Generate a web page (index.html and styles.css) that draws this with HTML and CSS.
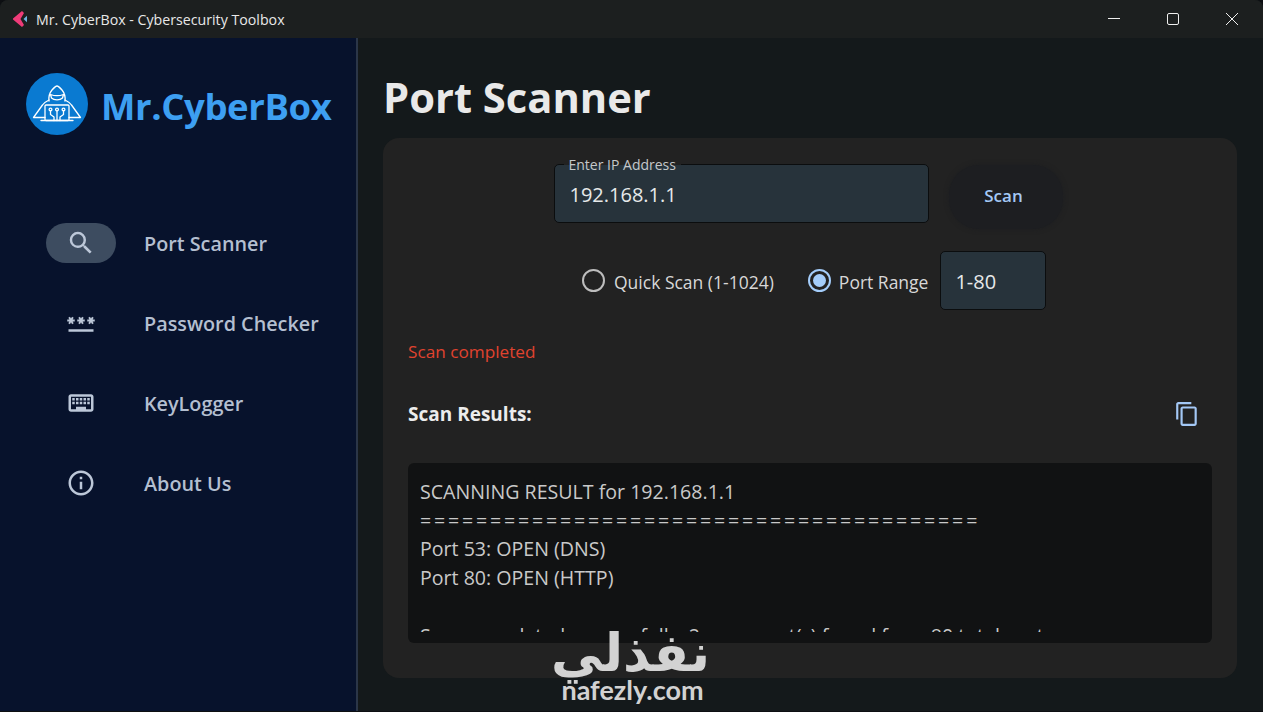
FILE: index.html
```html
<!DOCTYPE html>
<html lang="en">
<head>
<meta charset="utf-8">
<title>Mr. CyberBox - Cybersecurity Toolbox</title>
<link rel="stylesheet" href="styles.css">
</head>
<body>
<div class="window">
  <header class="titlebar">
    <svg class="app-icon" viewBox="0 0 16 16"><path d="M11.500 8 15 4.800V11.200z" fill="#6cb4e0"/><path d="M10 0 1 7.500V8.500L10 16 12 14 8.500 8 12 2z" fill="#ee3b78"/></svg>
    <span class="app-title">Mr. CyberBox - Cybersecurity Toolbox</span>
    <div class="win-controls">
      <svg viewBox="0 0 12 12"><path d="M0 5.500h12" /></svg>
      <svg viewBox="0 0 12 12"><rect x=".5" y=".5" width="11" height="11" rx="1.500"/></svg>
      <svg viewBox="0 0 12 12"><path d="M0 0l12 12M12 0 0 12"/></svg>
    </div>
  </header>
  <div class="body">
    <aside class="sidebar">
      <div class="brand">
        <svg class="logo" viewBox="0 0 62 62">
          <circle cx="31" cy="31" r="31" fill="#0a7ad1"/>
          <g fill="none" stroke="#fff" stroke-width="1.300" stroke-linejoin="round" stroke-linecap="round">
            <path d="M23 28c-.5-4 .5-8 3-11 2.500-2.800 4-4 5-4s2.500 1.200 5 4c2.500 3 3.500 7 3 11"/>
            <path d="M24.500 21.500c4 1.500 9 1.500 13 0l-1 3.500c-2.500 2.500-8.500 2.500-11 0z"/>
            <path d="M23 27c-2 1-5 2.500-6.500 5L7.500 44.500H19"/>
            <path d="M39 27c2 1 5 2.500 6.500 5l9 12.500H43"/>
            <rect x="19" y="32" width="24" height="15.500" rx="1"/>
            <path d="M15 47.500h32"/>
            <path d="M24.500 38v3.500l3.500 2.500v3.500M31 38v9.500M37.500 38v3.500L34 44v3.500"/>
            <circle cx="24.500" cy="36.500" r="1.400"/><circle cx="31" cy="36.500" r="1.400"/><circle cx="37.500" cy="36.500" r="1.400"/>
          </g>
        </svg>
        <span class="brand-name">Mr.CyberBox</span>
      </div>
      <nav class="nav">
        <a class="nav-item">
          <span class="nav-pill active">
            <svg viewBox="0 0 24 24"><path d="M15.500 14h-.79l-.28-.27A6.470 6.470 0 0 0 16 9.500 6.500 6.500 0 1 0 9.500 16c1.610 0 3.090-.59 4.230-1.570l.27.28v.79l5 4.990L20.490 19l-4.990-5zm-6 0C7.010 14 5 11.990 5 9.500S7.010 5 9.500 5 14 7.010 14 9.500 11.990 14 9.500 14z"/></svg>
          </span>
          <span>Port Scanner</span>
        </a>
        <a class="nav-item">
          <span class="nav-pill">
            <svg viewBox="0 0 24 24"><path d="M2 17h20v2H2v-2zm1.150-4.050L4 11.470l.85 1.480 1.300-.75-.85-1.480H7v-1.500H5.300l.85-1.470L4.850 7 4 8.470 3.150 7l-1.300.75.850 1.470H1v1.500h1.700l-.85 1.480 1.300.75zm6.700-.75 1.300.75.85-1.480.85 1.480 1.300-.75-.85-1.480H15v-1.500h-1.700l.85-1.470-1.300-.75L12 8.470 11.150 7l-1.300.75.85 1.470H9v1.500h1.700l-.85 1.480zM23 9.220h-1.700l.85-1.470-1.300-.75L20 8.470 19.150 7l-1.300.75.85 1.470H17v1.500h1.700l-.85 1.480 1.300.75.85-1.480.85 1.480 1.300-.75-.85-1.480H23v-1.500z"/></svg>
          </span>
          <span>Password Checker</span>
        </a>
        <a class="nav-item">
          <span class="nav-pill">
            <svg viewBox="0 0 24 24"><path d="M20 7v10H4V7h16m0-2H4c-1.100 0-1.990.9-1.990 2L2 17c0 1.100.9 2 2 2h16c1.100 0 2-.9 2-2V7c0-1.100-.9-2-2-2zm-9 3h2v2h-2V8zm0 3h2v2h-2v-2zM8 8h2v2H8V8zm0 3h2v2H8v-2zm-1 2H5v-2h2v2zm0-3H5V8h2v2zm9 7H8v-2h8v2zm0-4h-2v-2h2v2zm0-3h-2V8h2v2zm3 3h-2v-2h2v2zm0-3h-2V8h2v2z"/></svg>
          </span>
          <span>KeyLogger</span>
        </a>
        <a class="nav-item">
          <span class="nav-pill">
            <svg viewBox="0 0 24 24"><path d="M11 7h2v2h-2zm0 4h2v6h-2zm1-9C6.480 2 2 6.480 2 12s4.480 10 10 10 10-4.480 10-10S17.520 2 12 2zm0 18c-4.410 0-8-3.590-8-8s3.590-8 8-8 8 3.590 8 8-3.590 8-8 8z"/></svg>
          </span>
          <span>About Us</span>
        </a>
      </nav>
    </aside>
    <main class="main">
      <h1 class="page-title">Port Scanner</h1>
      <section class="card">
        <div class="row-ip">
          <div class="field ip-field">
            <label class="float-label">Enter IP Address</label>
            <span>192.168.1.1</span>
          </div>
          <button class="scan-btn">Scan</button>
        </div>
        <div class="row-options">
          <span class="radio"></span>
          <span class="radio-text">Quick Scan (1-1024)</span>
          <span class="radio on"></span>
          <span class="radio-text short">Port Range</span>
          <div class="field range-field">1-80</div>
        </div>
        <p class="status">Scan completed</p>
        <div class="results-head">
          <h2>Scan Results:</h2>
          <svg class="copy" viewBox="0 0 24 24"><path d="M16 1H4c-1.100 0-2 .9-2 2v14h2V3h12V1zm3 4H8c-1.100 0-2 .9-2 2v14c0 1.100.9 2 2 2h11c1.100 0 2-.9 2-2V7c0-1.100-.9-2-2-2zm0 16H8V7h11v14z"/></svg>
        </div>
        <div class="results">
          <div class="results-inner">
            <div>SCANNING RESULT for 192.168.1.1</div>
            <div class="rule">========================================</div>
            <div>Port 53: OPEN (DNS)</div>
            <div>Port 80: OPEN (HTTP)</div>
            <div>&nbsp;</div>
            <div>Scan completed successfully. 2 open port(s) found from 80 total ports</div>
          </div>
        </div>
      </section>
    </main>
  </div>
  <div class="watermark">
    <div class="wm-ar" lang="ar" dir="rtl">نفذلي</div>
    <div class="wm-en">nafezly.com</div>
  </div>
</div>
</body>
</html>
```
FILE: styles.css
```css
* { box-sizing: border-box; }
html, body { margin: 0; height: 100%; background: #0d0f12; overflow: hidden; }
body { font-family: "Open Sans", "Noto Sans", sans-serif; }
.window { position: relative; width: 1263px; height: 711px; display: flex; flex-direction: column; background: #14191b; border-radius: 8px 8px 0 0; overflow: hidden; }
.titlebar { height: 38px; flex: none; background: #1c1f1f; display: flex; align-items: center; padding-left: 12px; color: #e8e8e8; font-size: 14.200px; }
.app-icon { width: 16px; height: 16px; margin-right: 8px; }
.win-controls { margin-left: auto; display: flex; align-items: center; gap: 47px; padding-right: 25px; }
.win-controls svg { width: 12px; height: 12px; fill: none; stroke: #eee; stroke-width: 1; display: block; }
.body { flex: 1; display: flex; min-height: 0; }
.sidebar { width: 358px; flex: none; background: #07122c; border-right: 2px solid #2b3648; padding: 35px 0 0 26px; }
.brand { display: flex; align-items: center; gap: 13px; }
.logo { width: 62px; height: 62px; flex: none; }
.brand-name { color: #3d9ff2; font-size: 36.500px; line-height: 62px; font-weight: 700; letter-spacing: -.4px; white-space: nowrap; position: relative; top: 2px; }
.nav { margin: 88px 0 0 20px; display: flex; flex-direction: column; gap: 40px; }
.nav-item { display: flex; align-items: center; gap: 28px; height: 40px; color: #b4bfd0; font-size: 19.800px; font-weight: 600; }
.nav-pill { width: 70px; height: 40px; border-radius: 20px; display: flex; align-items: center; justify-content: center; }
.nav-pill.active { background: #3d4c60; }
.nav-pill svg { width: 30px; height: 30px; fill: #bcc7d8; }
.main { flex: 1; min-width: 0; padding: 26px 26px 33px 25px; display: flex; flex-direction: column; }
.page-title { margin: 0 0 8px; color: #e9e9e9; font-size: 41.700px; line-height: 66px; font-weight: 700; }
.card { flex: 1; background: #222222; border-radius: 16px; padding: 26px 25px 0; min-height: 0; display: flex; flex-direction: column; }
.row-ip { display: flex; justify-content: center; align-items: flex-start; gap: 20px; padding-right: 4px; }
.field { background: #27333b; border: 1px solid #0b0d0e; border-radius: 5px; color: #e6e9ea; font-size: 20px; display: flex; align-items: center; padding-top: 2px; }
.ip-field { position: relative; width: 375px; height: 59px; padding-left: 15px; }
.float-label { position: absolute; left: 9px; top: -9px; padding: 0 5px; background: linear-gradient(#222222 50%, #27333b 50%); font-size: 14px; line-height: 18px; color: #c5c8ca; }
.scan-btn { width: 114px; height: 64px; margin-top: 1px; border: 0; border-radius: 30px; padding: 0 4px 4px 0; background: #1d1e21; box-shadow: 0 0 5px #1d1e21; color: #a4c8f5; font: 600 17px "Open Sans", sans-serif; }
.row-options { display: flex; align-items: center; margin: 22px 0 0 174px; color: #d8d8d8; font-size: 17.500px; }
.radio { width: 23px; height: 23px; border-radius: 50%; border: 2.500px solid #bdbdbd; flex: none; margin-right: 9px; }
.radio.on { border-color: #a4cdfa; position: relative; margin-right: 8px; }
.radio.on::after { content: ""; position: absolute; inset: 3px; border-radius: 50%; background: #a4cdfa; }
.radio-text { margin-right: 34px; padding-top: 2px; white-space: nowrap; }
.radio-text.short { margin-right: 12px; }
.range-field { width: 106px; height: 59px; padding-left: 14px; }
.status { margin: 30px 0 0; color: #e0432f; font-size: 17.200px; line-height: 24px; }
.results-head { display: flex; align-items: center; justify-content: space-between; height: 32px; margin-top: 34px; padding-right: 12px; }
.results-head h2 { margin: 0; color: #ececec; font-size: 19px; font-weight: 700; }
.copy { width: 26px; height: 26px; fill: #a4c8f5; }
.results { margin-top: 33px; height: 180px; background: #111213; border-radius: 6px; padding: 15px 12px 11px; color: #c9c9c9; font-size: 19.600px; line-height: 28.700px; white-space: nowrap; }
.results-inner { height: 100%; overflow: hidden; }
.rule { letter-spacing: 2.800px; }
.watermark { position: absolute; left: 555px; top: 625px; width: 155px; text-align: center; color: #d2d2d2; pointer-events: none; }
.wm-ar { font-family: "DejaVu Sans", sans-serif; font-size: 52px; font-weight: 700; line-height: 56px; }
.wm-en { font-family: "Lato", sans-serif; font-size: 27px; line-height: 30px; font-weight: 700; margin-top: -6px; }
```
